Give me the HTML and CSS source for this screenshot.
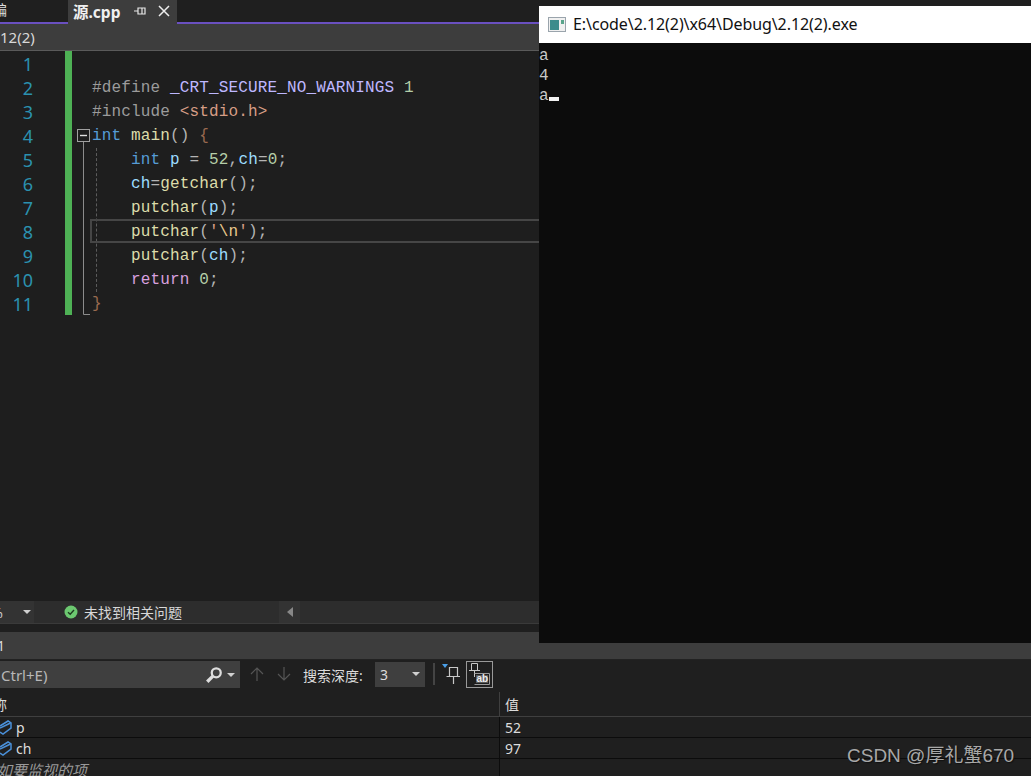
FILE: index.html
```html
<!DOCTYPE html>
<html lang="en">
<head>
    <meta charset="UTF-8">
    <meta name="viewport" content="width=device-width, initial-scale=1.0">
    <title>源.cpp</title>
    <link rel="stylesheet" href="styles.css">
</head>
<body>
    <div class="ide">
        <div class="tabstrip">
            <div class="tab-old">编</div>
            <div class="tab-active">
                <span class="tab-name">源.cpp</span>
                <svg class="tab-pin" width="12" height="12" viewBox="0 0 12 12"><path d="M0 6H4M4 2.5V9.5M4 3H11V9H4M8 3V9" fill="none" stroke="#e8e8e8" stroke-width="1.2"/></svg>
                <svg class="tab-close" width="12" height="12" viewBox="0 0 12 12"><path d="M1 1L11 11M11 1L1 11" fill="none" stroke="#eee" stroke-width="1.5"/></svg>
            </div>
        </div>
        <div class="crumb">12(2)</div>
        <div class="editor">
            <div class="gutter">
                <div>1</div><div>2</div><div>3</div><div>4</div><div>5</div><div>6</div>
                <div>7</div><div>8</div><div>9</div><div>10</div><div>11</div>
            </div>
            <div class="change-bar"></div>
            <svg class="fold" width="20" height="264" viewBox="0 0 20 264">
                <rect x="5.5" y="78.5" width="12" height="12" fill="none" stroke="#a0a0a0"/>
                <path d="M8 84.5H15" stroke="#e0e0e0" stroke-width="1.4"/>
                <path d="M11.5 91V263.5H18" fill="none" stroke="#8c8c8c"/>
            </svg>
            <div class="code">
                <div class="row"></div>
                <div class="row"><span class="pp">#define </span><span class="macro">_CRT_SECURE_NO_WARNINGS</span> <span class="num">1</span></div>
                <div class="row"><span class="pp">#include </span><span class="str">&lt;stdio.h&gt;</span></div>
                <div class="row"><span class="kw">int</span> <span class="fn">main</span><span class="pn">()</span> <span class="brace">{</span></div>
                <div class="block">
                    <div class="row"><span class="kw">int</span> <span class="var">p</span> <span class="pn">=</span> <span class="num">52</span><span class="pn">,</span><span class="var">ch</span><span class="pn">=</span><span class="num">0</span><span class="pn">;</span></div>
                    <div class="row"><span class="var">ch</span><span class="pn">=</span><span class="fn">getchar</span><span class="pn">();</span></div>
                    <div class="row"><span class="fn">putchar</span><span class="pn">(</span><span class="var">p</span><span class="pn">);</span></div>
                    <div class="row current"><span class="fn">putchar</span><span class="pn">(</span><span class="str">'</span><span class="esc">\n</span><span class="str">'</span><span class="pn">);</span></div>
                    <div class="row"><span class="fn">putchar</span><span class="pn">(</span><span class="var">ch</span><span class="pn">);</span></div>
                    <div class="row"><span class="ret">return</span> <span class="num">0</span><span class="pn">;</span></div>
                </div>
                <div class="row"><span class="brace">}</span></div>
            </div>
        </div>
        <div class="status">
            <div class="zoom-box"><span class="zoom-val">%</span><span class="caret"></span></div>
            <svg class="ok" width="14" height="14" viewBox="0 0 14 14"><circle cx="7" cy="7" r="6.5" fill="#6cc870"/><path d="M4 7.2L6.2 9.2L10 5" fill="none" stroke="#1e3a20" stroke-width="1.4"/></svg>
            <span class="status-text">未找到相关问题</span>
            <div class="scroll-left"><span class="tri-left"></span></div>
        </div>
        <div class="gap"></div>
        <div class="panel-title">1</div>
        <div class="toolbar">
            <div class="search">
                <span class="search-hint">Ctrl+E)</span>
                <svg class="search-icon" width="18" height="18" viewBox="0 0 16 16"><circle cx="10" cy="6" r="4" fill="none" stroke="#ddd" stroke-width="2"/><path d="M7 9L2 14" stroke="#ddd" stroke-width="3"/></svg>
                <span class="caret"></span>
            </div>
            <svg class="nav-up" width="16" height="16" viewBox="0 0 16 16"><path d="M8 15V2M2 8L8 2L14 8" fill="none" stroke="#555" stroke-width="1.2"/></svg>
            <svg class="nav-down" width="16" height="16" viewBox="0 0 16 16"><path d="M8 1V14M2 8L8 14L14 8" fill="none" stroke="#555" stroke-width="1.2"/></svg>
            <span class="depth-label">搜索深度:</span>
            <div class="depth"><span>3</span><span class="caret"></span></div>
            <div class="sep"></div>
            <svg class="filter-pin" width="18" height="22" viewBox="0 0 18 22"><path d="M0 1H6L3 5Z" fill="#4a9fe8"/><path d="M7.5 4.5H15.5V13.5H7.5ZM4.5 13.5H18M11.5 14V21" fill="none" stroke="#c8c8c8" stroke-width="1.2"/></svg>
            <div class="pin-ab">
                <svg width="25" height="25" viewBox="0 0 25 25"><path d="M4.5 1.5H10.5V8.5H4.5ZM2 8.5H13M7.5 9V15" fill="none" stroke="#c8c8c8"/><path d="M7.5 11.5H22.5V22.5H7.5" fill="none" stroke="#999"/><rect x="9" y="13" width="12" height="8" fill="#5a5a5a"/><text x="9.5" y="20" class="ab-text">ab</text></svg>
            </div>
        </div>
        <div class="watch-head">
            <div class="col-name"><span class="cut">称</span></div>
            <div class="col-val">值</div>
        </div>
        <div class="watch-row">
            <div class="col-name"><svg class="var-icon" width="12" height="16" viewBox="0 0 12 16"><path d="M0 6L8 1L11 3V8L3 14L0 12" fill="none" stroke="#4a90d9" stroke-width="1.5"/><path d="M0 8L10.5 3" stroke="#4a90d9" stroke-width="1.5"/></svg>p</div>
            <div class="col-val">52</div>
        </div>
        <div class="watch-row">
            <div class="col-name"><svg class="var-icon" width="12" height="16" viewBox="0 0 12 16"><path d="M0 6L8 1L11 3V8L3 14L0 12" fill="none" stroke="#4a90d9" stroke-width="1.5"/><path d="M0 8L10.5 3" stroke="#4a90d9" stroke-width="1.5"/></svg>ch</div>
            <div class="col-val">97</div>
        </div>
        <div class="watch-row last">
            <div class="col-name"><span class="add-hint">如要监视的项</span></div>
            <div class="col-val"></div>
        </div>
    </div>

    <div class="console">
        <div class="console-title">
            <svg width="18" height="16" viewBox="0 0 18 16"><rect x="0.5" y="0.5" width="17" height="14" fill="#f0f0f0" stroke="#9aa4ac"/><rect x="2" y="3" width="9" height="10" fill="#3d8c8c"/><rect x="13" y="3" width="3" height="4" fill="#5aa58c"/></svg>
            <span class="console-path">E:\code\2.12(2)\x64\Debug\2.12(2).exe</span>
        </div>
        <div class="console-body">
            <div>a</div>
            <div>4</div>
            <div>a<span class="cursor"></span></div>
        </div>
    </div>

    <div class="watermark">CSDN @厚礼蟹670</div>
</body>
</html>
```

FILE: styles.css
```css
* {
    box-sizing: border-box;
}
html, body {
    margin: 0;
    height: 776px;
    overflow: hidden;
    background: #1f1f1f;
}
body {
    font-family: "Noto Sans", "Noto Sans CJK SC", sans-serif;
    color: #dcdcdc;
    font-size: 14px;
}
.ide {
    width: 1031px;
    height: 776px;
    overflow: hidden;
    display: flex;
    flex-direction: column;
}
.ide > div {
    flex-shrink: 0;
}

/* tabs */
.tabstrip {
    height: 24px;
    display: flex;
    background: linear-gradient(#1f1f1f 22px, #6a50c0 22px);
}
.tab-old {
    width: 61px;
    margin-left: -7px;
    height: 22px;
    line-height: 20px;
    font-size: 14px;
    overflow: hidden;
    flex-shrink: 0;
}
.tab-active {
    width: 109px;
    margin-left: 14px;
    background: #3d3d3d;
    display: flex;
    align-items: center;
    padding: 0 0 2px 5px;
    font-weight: 700;
    font-size: 15.5px;
    color: #f0f0f0;
}
.tab-name {
    width: 61px;
}
.tab-close {
    margin-left: 12px;
}
.crumb {
    height: 27px;
    line-height: 27px;
    background: #3d3d3d;
    border-bottom: 1px solid #5a5a5a;
    font-size: 15px;
    color: #d8d8d8;
}

/* editor */
.editor {
    height: 550px;
    background: #1e1e1e;
    display: flex;
    font-family: "Liberation Mono", monospace;
    font-size: 16px;
}
.gutter {
    width: 65px;
    padding: 1px 32px 0 0;
    text-align: right;
    color: #2b91af;
    font-family: "Noto Sans", sans-serif;
    font-size: 18px;
    line-height: 24px;
}
.change-bar {
    width: 7px;
    height: 264px;
    background: #4eb155;
}
.fold {
    flex-shrink: 0;
}
.code {
    flex: 1;
    padding-top: 1px;
    letter-spacing: 0.15px;
}
.row {
    height: 24px;
    line-height: 24px;
    color: #d4d4d4;
    white-space: pre;
}
.block {
    margin-left: 4px;
    padding-left: 34px;
    border-left: 1px dashed #5c5c5c;
}
.row.current {
    margin: -1px 0 1px -41px;
    padding-left: 39px;
    border: 2px solid #464646;
    border-right: 0;
    line-height: 22px;
}
.pp { color: #9b9b9b; }
.macro { color: #beb7ff; }
.num { color: #b5cea8; }
.str { color: #d69d85; }
.esc { color: #e8c88c; }
.kw { color: #569cd6; }
.fn { color: #dcdcaa; }
.var { color: #9cdcfe; }
.ret { color: #d8a0df; }
.pn { color: #b4b4b4; }
.brace { color: #9a6a50; }

/* status */
.status {
    height: 23px;
    background: #2d2d2d;
    border-bottom: 1px solid #3a3a3a;
    display: flex;
    align-items: center;
    font-size: 14px;
}
.zoom-box {
    width: 34px;
    height: 22px;
    background: #333;
    display: flex;
    align-items: center;
    justify-content: flex-end;
    gap: 20px;
    margin-right: 30px;
    overflow: hidden;
}
.zoom-val {
    color: #ccc;
}
.zoom-box .caret {
    margin-right: 3px;
}
.status-text {
    margin-left: 6px;
    width: 195px;
    color: #d8d8d8;
}
.scroll-left {
    width: 21px;
    height: 22px;
    background: #333;
    display: flex;
    align-items: center;
    justify-content: center;
}
.tri-left {
    width: 0;
    height: 0;
    border: 5px solid transparent;
    border-right: 6px solid #888;
    border-left: 0;
}
.caret {
    width: 0;
    height: 0;
    border: 4px solid transparent;
    border-top: 4px solid #d0d0d0;
    border-bottom: 0;
}
.gap {
    height: 8px;
    background: #1f1f1f;
}
.panel-title {
    height: 28px;
    line-height: 28px;
    background: #3d3d3d;
    border-bottom: 1px solid #222;
    color: #dcdcdc;
    text-indent: -3px;
}

/* watch toolbar */
.toolbar {
    height: 28px;
    display: flex;
    align-items: center;
    background: #1f1f1f;
}
.search {
    width: 240px;
    height: 27px;
    padding-top: 1px;
    background: #3f3f3f;
    display: flex;
    align-items: center;
    color: #b8b8b8;
}
.search-hint {
    width: 204px;
    margin-left: 1px;
    font-size: 15px;
}
.search .caret {
    margin-left: 4px;
}
.nav-up {
    margin-left: 9px;
}
.nav-down {
    margin-left: 11px;
}
.depth-label {
    margin-left: 11px;
    padding-top: 2px;
    width: 72px;
    color: #dcdcdc;
}
.depth {
    width: 50px;
    height: 25px;
    background: #3f3f3f;
    display: flex;
    align-items: center;
    justify-content: space-between;
    padding: 0 5px;
}
.sep {
    width: 2px;
    height: 22px;
    margin-left: 8px;
    background: #444;
}
.filter-pin {
    margin-left: 7px;
}
.pin-ab {
    width: 27px;
    height: 27px;
    margin-left: 6px;
    border: 1px solid #999;
}
.ab-text {
    font-family: "Liberation Sans", sans-serif;
    font-size: 10px;
    font-weight: 700;
    fill: #eee;
}

/* watch table */
.watch-head {
    height: 29px;
    padding-top: 4px;
    display: grid;
    grid-template-columns: 499px 1fr;
    border-bottom: 1px solid #3f3f3f;
    line-height: 26px;
}
.watch-row {
    height: 21px;
    line-height: 22px;
    display: grid;
    grid-template-columns: 499px 1fr;
    border-bottom: 1px solid #0c0c0c;
}
.watch-row.last {
    border-bottom: 0;
}
.watch-head .col-val {
    border-left: 1px solid #3f3f3f;
    padding-left: 5px;
}
.col-val {
    border-left: 1px solid #0c0c0c;
    padding-left: 5px;
}
.col-name {
    display: flex;
    align-items: center;
    overflow: hidden;
}
.cut {
    margin-left: -7px;
}
.var-icon {
    margin: 0 4px 0 0;
    flex-shrink: 0;
}
.add-hint {
    margin-left: -3px;
    font-size: 15px;
    font-style: italic;
    color: #999;
}

/* console window floats over the IDE */
.console {
    position: absolute;
    left: 539px;
    top: 6px;
    width: 492px;
    height: 637px;
    background: #0c0c0c;
}
.console-title {
    height: 37px;
    background: #fff;
    color: #111;
    display: flex;
    align-items: center;
    gap: 7px;
    padding-left: 9px;
    font-size: 16px;
    letter-spacing: -0.08px;
}
.console-path {
    margin-top: -2px;
}
.console-body {
    padding-top: 3px;
    font-family: "Liberation Mono", monospace;
    font-size: 16px;
    line-height: 20px;
    color: #c8c8c8;
}
.cursor {
    display: inline-block;
    width: 10px;
    height: 4px;
    margin-bottom: -1px;
    background: #f2f2f2;
}
.watermark {
    position: absolute;
    left: 847px;
    top: 740px;
    font-family: "Liberation Sans", "Noto Sans CJK SC", sans-serif;
    font-size: 19px;
    color: #a8a8a8;
    text-shadow: 1px 1px 1px #111;
}
```
